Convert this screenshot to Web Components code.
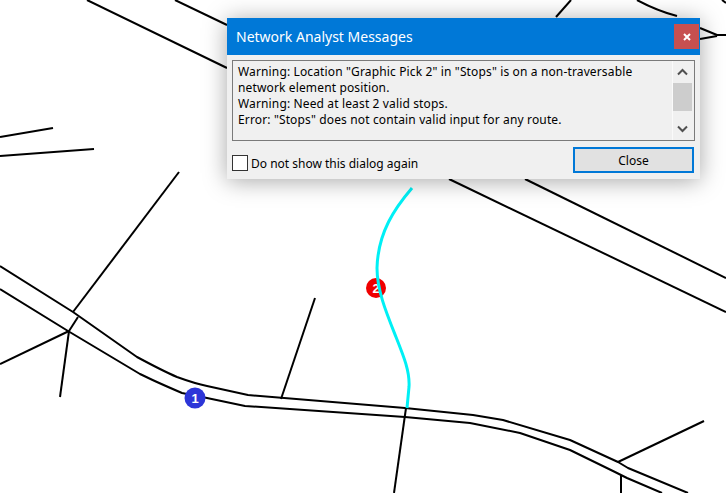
<!DOCTYPE html>
<html>
<head>
<meta charset="utf-8">
<style>
html, body { margin: 0; padding: 0; background: #fff; }
</style>
</head>
<body>
<map-canvas>
  <na-dialog heading="Network Analyst Messages">
    <div>Warning: Location "Graphic Pick 2" in "Stops" is on a non-traversable network element position.</div>
    <div>Warning: Need at least 2 valid stops.</div>
    <div>Error: "Stops" does not contain valid input for any route.</div>
  </na-dialog>
</map-canvas>

<script>
const map_tpl = document.createElement('template');
map_tpl.innerHTML = `
<style>
:host { display: block; position: relative; width: 726px; height: 493px; overflow: hidden; background: #fff; }
svg { display: block; }
.road { fill: none; stroke: #000; stroke-width: 2; stroke-linejoin: round; }
.route { fill: none; stroke: #00f0f5; stroke-width: 3; }
text { font-family: "Liberation Sans", sans-serif; font-size: 13px; font-weight: bold; fill: #fff; text-anchor: middle; }
</style>
<svg width="726" height="493" viewBox="0 0 726 493">
  <g class="roads">
    <path class="road" d="M87 0L227 68"/>
    <path class="road" d="M175 0L227 25"/>
    <path class="road" d="M556 17L571 0"/>
    <path class="road" d="M637 0C650 7 662 12 677 16"/>
    <path class="road" d="M700 28L717 35L726 35"/>
    <path class="road" d="M700 39L717 36"/>
    <path class="road" d="M722 0L726 3"/>
    <path class="road" d="M0 137L53 128"/>
    <path class="road" d="M0 156L94 149"/>
    <path class="road" d="M449 179L726 312"/>
    <path class="road" d="M525 179L726 278"/>
    <path class="road" d="M179 172L73 312"/>
    <path class="road" d="M78 317L69 331"/>
    <path class="road" d="M0 364L69 331"/>
    <path class="road" d="M69 331L60 397"/>
    <path class="road" d="M315 298L281 399"/>
    <path class="road" d="M406 408L394 493"/>
    <path class="road" d="M704 421L618 462"/>
    <path class="road" d="M621 475V493"/>
    <path class="road" d="M0 266L73 312L137 357C150 364 163 371 177 377C188 381 197 384 207 386L248 395L405 408L473 415L503 420L570 440L618 462L628 468L688 493"/>
    <path class="road" d="M0 289L68 331L140 374C154 381 168 387 182 393L207 398L245 406L405 417L470 423L520 433L570 450L615 472L627 478L662 493"/>
  </g>
  <circle cx="376" cy="288" r="10" fill="#f00000"/>
  <text x="376" y="293">2</text>
  <path class="route" d="M412 188C395 208 378 232 377 268C377 290 386 312 396 337C404 357 410 372 409 387L407 408"/>
  <circle cx="195" cy="398" r="10.5" fill="#2d36d8"/>
  <text x="195" y="403">1</text>
</svg>
<slot></slot>
`;

class MapCanvas extends HTMLElement {
    constructor() {
        super();
        this.attachShadow({ mode: 'open' }).append(map_tpl.content.cloneNode(true));
    }
}

const dialog_tpl = document.createElement('template');
dialog_tpl.innerHTML = `
<style>
:host {
    position: absolute; left: 227px; top: 18px;
    display: flex; flex-direction: column;
    width: 473px; height: 161px;
    background: #f0f0f0;
    box-shadow: 0 2px 22px rgba(0,0,0,.35);
    font-family: "Noto Sans", sans-serif;
    font-size: 12px;
    color: #000;
}
.title {
    flex: none; display: flex; align-items: center; justify-content: space-between;
    height: 37px; padding: 0 1px 0 9px;
    background: #0078d7; color: #fff; font-size: 14px;
}
.x {
    width: 25px; height: 25px; background: #c75050; color: #fff;
    display: flex; align-items: center; justify-content: center;
}
.body { flex: 1; display: flex; flex-direction: column; gap: 6px; padding: 5px 5px 6px; }
msg-box { flex: none; }
.foot { display: flex; align-items: flex-end; justify-content: space-between; padding-right: 1px; }
.foot button {
    width: 121px; height: 26px; padding: 0;
    border: 2px solid #0078d7; background: #e1e1e1;
    font: inherit; color: #000;
}
label { display: flex; align-items: center; gap: 3px; margin-bottom: 1px; }
label span:last-child { line-height: 16px; margin-top: 2px; }
.box { width: 14px; height: 14px; border: 1px solid #333; background: #fff; }
</style>
<div class="title">
    <span id="heading"></span>
    <span class="x"><svg width="8" height="8" viewBox="0 0 8 8"><path d="M1 1L7 7M7 1L1 7" stroke="#fff" stroke-width="2"/></svg></span>
</div>
<div class="body">
    <msg-box><slot></slot></msg-box>
    <div class="foot">
        <label><span class="box"></span><span>Do not show this dialog again</span></label>
        <button>Close</button>
    </div>
</div>
`;

class NaDialog extends HTMLElement {
    constructor() {
        super();
        this.attachShadow({ mode: 'open' }).append(dialog_tpl.content.cloneNode(true));
        this.shadowRoot.querySelector('#heading').textContent = this.getAttribute('heading');
    }
}

const msg_tpl = document.createElement('template');
msg_tpl.innerHTML = `
<style>
:host {
    display: flex; height: 79px;
    border: 1px solid #7a7a7a; background: #f0f0f0;
    line-height: 16px; letter-spacing: .14px;
}
.text { flex: 1; padding: 3px 0 0 5px; }
.bar { flex: none; width: 19px; margin: 0 2px 0 0; display: flex; flex-direction: column; border-left: 1px solid #fafafa; background: #f0f0f0; }
.arrow { flex: none; height: 22px; display: flex; align-items: center; justify-content: center; }
.thumb { flex: none; height: 28px; background: #cdcdcd; }
.fill { flex: 1; }
</style>
<div class="text"><slot></slot></div>
<div class="bar">
    <span class="arrow"><svg width="11" height="8" viewBox="0 0 11 8"><path d="M1 6.5L5.5 2L10 6.5" fill="none" stroke="#505050" stroke-width="2"/></svg></span>
    <span class="thumb"></span>
    <span class="fill"></span>
    <span class="arrow"><svg width="11" height="8" viewBox="0 0 11 8"><path d="M1 1.5L5.5 6L10 1.5" fill="none" stroke="#505050" stroke-width="2"/></svg></span>
</div>
`;

class MsgBox extends HTMLElement {
    constructor() {
        super();
        this.attachShadow({ mode: 'open' }).append(msg_tpl.content.cloneNode(true));
    }
}

customElements.define('map-canvas', MapCanvas);
customElements.define('na-dialog', NaDialog);
customElements.define('msg-box', MsgBox);
</script>
</body>
</html>
